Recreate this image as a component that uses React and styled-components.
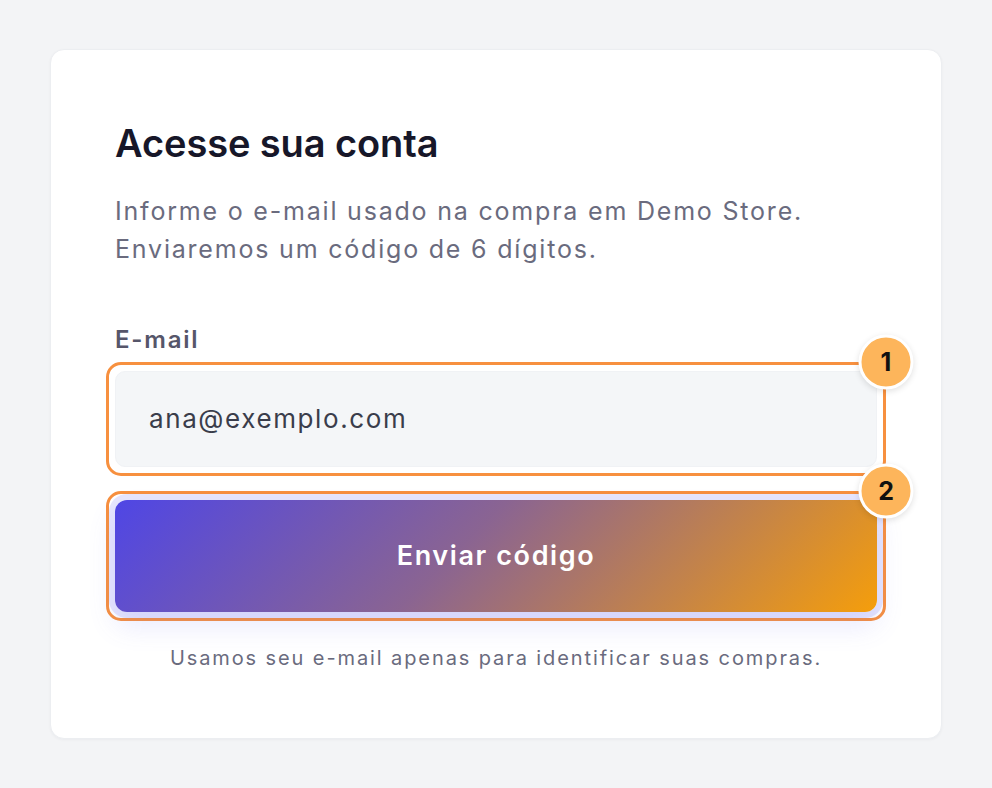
import React from 'react';
import styled, { createGlobalStyle } from 'styled-components';

const Global = createGlobalStyle`
    * { box-sizing: border-box; }
    body {
        margin: 0;
        background: #f3f4f6;
        font-family: Inter, "Noto Sans", sans-serif;
    }
`

const Page = styled.div`
    min-height: 788px;
    padding: 49px 50px;
`

const Card = styled.div`
    width: 892px;
    height: 690px;
    background: #ffffff;
    border: 1px solid #eceef1;
    border-radius: 14px;
    box-shadow: 0 1px 3px rgba(15, 23, 42, 0.04);
    padding: 71px 64px 0 64px;
    display: flex;
    flex-direction: column;
`

const Title = styled.h1`
    margin: 0;
    font-size: 38px;
    line-height: 1.2;
    font-weight: 600;
    color: #171729;
    letter-spacing: -0.1px;
`

const Description = styled.p`
    margin: 25px 0 0 0;
    font-size: 25px;
    line-height: 38px;
    letter-spacing: 1.8px;
    color: #6a6b7e;
`

const Label = styled.label`
    margin-top: 56px;
    font-size: 24px;
    line-height: 31px;
    font-weight: 600;
    letter-spacing: 1.8px;
    color: #56566a;
`

const Highlight = styled.div`
    position: relative;
    margin: ${({top}) => top}px -9px 0 -9px;
    border: 3px solid #f7903f;
    border-radius: 15px;
    padding: 6px;
`

const Badge = styled.span`
    position: absolute;
    top: -3px;
    right: -3px;
    transform: translate(50%, -50%);
    width: 55px;
    height: 55px;
    border-radius: 50%;
    background: #fdb55b;
    border: 3px solid #ffffff;
    box-shadow: 0 2px 6px rgba(0, 0, 0, 0.12);
    display: flex;
    align-items: center;
    justify-content: center;
    font-size: 25px;
    font-weight: 700;
    color: #111111;
    z-index: 2;
`

const Input = styled.input`
    display: block;
    width: 100%;
    height: 96px;
    border: 1px solid #f0f2f5;
    border-radius: 10px;
    background: #f4f6f8;
    padding: 0 33px;
    font-family: inherit;
    font-size: 26px;
    letter-spacing: 1.6px;
    color: #3a3d4b;
    outline: none;
`

const Button = styled.button`
    display: block;
    width: 100%;
    height: 112px;
    border: none;
    border-radius: 12px;
    background: linear-gradient(135deg, #4f46e5 0%, #8a6492 45%, #f59e0b 100%);
    box-shadow: 0 0 0 6px rgba(99, 102, 241, 0.16), 0 14px 28px rgba(99, 102, 241, 0.14);
    color: #ffffff;
    font-family: inherit;
    font-size: 27px;
    font-weight: 600;
    letter-spacing: 1.6px;
    cursor: pointer;
`

const Note = styled.p`
    margin: 24px 0 0 0;
    text-align: center;
    font-size: 20px;
    line-height: 27px;
    letter-spacing: 1.9px;
    color: #6a6b7e;
`

const App = () => {
    return (
        <>
            <Global />
            <Page>
                <Card>
                    <Title>Acesse sua conta</Title>
                    <Description>
                        Informe o e-mail usado na compra em Demo Store.<br />
                        Enviaremos um código de 6 dígitos.
                    </Description>
                    <Label>E-mail</Label>
                    <Highlight top={7}>
                        <Badge>1</Badge>
                        <Input defaultValue="ana@exemplo.com" readOnly />
                    </Highlight>
                    <Highlight top={15}>
                        <Badge>2</Badge>
                        <Button>Enviar código</Button>
                    </Highlight>
                    <Note>Usamos seu e-mail apenas para identificar suas compras.</Note>
                </Card>
            </Page>
        </>
    )
}

export default App;
